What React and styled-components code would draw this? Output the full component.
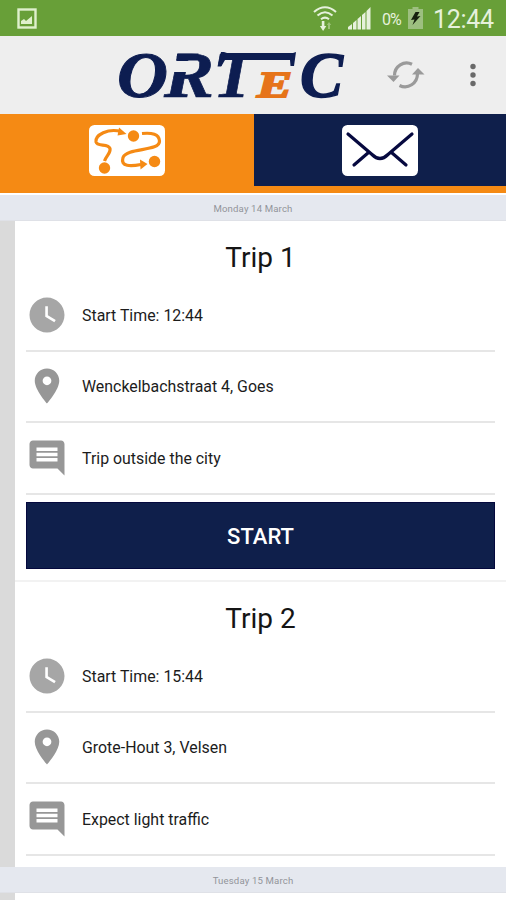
import React from 'react'
import styled, { createGlobalStyle } from 'styled-components'
import { MdWatchLater, MdPlace, MdComment } from 'react-icons/md'

const navy = '#0f1f4b'
const orange = '#f58a14'

const GlobalStyle = createGlobalStyle`
  * {
    box-sizing: border-box;
  }

  body {
    margin: 0;
    background-color: #fff;
    font-family: Roboto, sans-serif;
    overflow: hidden;
  }
`

const Screen = styled.div`
  display: flex;
  flex-direction: column;
  width: 506px;
  height: 900px;
  overflow: hidden;
`

const StatusBar = styled.div`
  display: flex;
  align-items: center;
  flex: 0 0 36px;
  padding: 0 12px 0 17px;
  background-color: #689f38;
  color: #e6f1dc;
`

const StatusIcons = styled.div`
  display: flex;
  align-items: center;
  gap: 11px;
  margin-left: auto;
`

const Percent = styled.span`
  width: 21px;
  margin: 3px 5px 0 11px;
  font-size: 16px;
  letter-spacing: -0.9px;
  white-space: nowrap;
`

const Clock = styled.span`
  width: 61px;
  margin: 2px 0 0 10px;
  font-size: 25px;
  letter-spacing: -0.3px;
  white-space: nowrap;
`

const Header = styled.header`
  display: flex;
  align-items: center;
  flex: 0 0 78px;
  padding: 0 25px 0 110px;
  background-color: #eeeeee;
`

const IconButton = styled.button`
  display: flex;
  padding: 0;
  border: 0;
  margin-left: ${props => props.gap};
  background: none;
`

const Tabs = styled.nav`
  display: grid;
  grid-template-columns: 254px 1fr;
  flex: 0 0 79px;
  padding-bottom: 7px;
  background-color: ${orange};
`

const Tab = styled.button`
  display: flex;
  justify-content: center;
  padding: 11px 0 0;
  border: 0;
  background-color: ${props => (props.selected ? orange : navy)};
`

const DateBar = styled.div`
  display: flex;
  align-items: center;
  justify-content: center;
  flex: 0 0 26px;
  margin-top: ${props => props.gap || 0};
  padding-top: 1px;
  border-bottom: 1px solid #dfe1e7;
  background-color: #e5e8ef;
  color: #92949a;
  font-size: 9.6px;
  letter-spacing: 0.15px;
`

const Day = styled.section`
  flex: 0 0 ${props => props.height};
  overflow: hidden;
  border-left: 15px solid #dadada;
`

const Card = styled.article`
  height: 361px;
  padding: 0 11px;
  border-bottom: 2px solid #f2f2f2;
`

const Title = styled.h2`
  height: 59px;
  margin: 0;
  padding-top: 7px;
  color: #151515;
  font-size: 28px;
  font-weight: 400;
  line-height: 60px;
  text-align: center;
`

const Row = styled.div`
  display: flex;
  align-items: center;
  height: 71.6px;
  border-bottom: 2px solid #e6e6e6;
  color: #1c1c1c;
  font-size: 15.9px;
`

const RowIcon = styled.span`
  display: flex;
  width: 56px;
  color: ${props => props.tint || '#979797'};
`

const RowText = styled.span`
  padding-top: 1px;
`

const StartButton = styled.button`
  display: block;
  width: 100%;
  height: 67px;
  margin-top: 7px;
  padding: 2px 0 0;
  border: 1px solid #04083d;
  background-color: ${navy};
  color: #fff;
  font-family: Roboto, sans-serif;
  font-size: 22px;
  font-weight: 500;
`

const LogoSvg = styled.svg`
  overflow: visible;
`

const LogoText = styled.text`
  font-family: 'Liberation Serif', serif;
  font-size: ${props => props.size || 66}px;
  font-style: italic;
  font-weight: 700;
`

const PictureIcon = () => (
  <svg width="20" height="21" viewBox="0 0 20 21">
    <rect x="1.5" y="1.5" width="17" height="18" fill="none" stroke="#dff0cd" strokeWidth="2.4" />
    <path d="M4 16v-3l3-2 2 2 6-5v8z" fill="#dff0cd" />
  </svg>
)

const WifiIcon = () => (
  <svg width="24" height="26" viewBox="0 0 24 26">
    <g fill="none" stroke="#e6f1dc" strokeWidth="2.1">
      <path d="M1 7Q12-2.500 23 7" />
      <path d="M4.500 10.500Q12 4 19.500 10.500" />
      <path d="M8 14.200Q12 11 16 14.200" />
    </g>
    <path d="M8.800 16h2.600v5h1.900L10.100 26l-3.200-5h1.900z" fill="#e6f1dc" />
    <path d="M15 24v-4h-1.200l2.200-3 2.200 3H17v4z" fill="#9cc179" />
  </svg>
)

const SignalIcon = () => (
  <svg width="23" height="23" viewBox="0 0 23 23">
    <g fill="#e6f1dc">
      <path d="M0 22.500V20l4-3v5.500z" />
      <path d="M5 22.500V16l3.500-3v9.500z" />
      <path d="M9.500 22.500V12l3.500-3v13.500z" />
      <path d="M14 22.500V8l3.500-3v17.500z" />
      <path d="M18.500 22.500V4L22.500 0v22.500z" />
    </g>
  </svg>
)

const BatteryIcon = () => (
  <svg width="15" height="22" viewBox="0 0 15 22">
    <path d="M0 2h4.500V0h6v2H15v20H0z" fill="#9dbf80" />
    <path d="M7.500 5h4L9 9.500l3.500-.5L4.500 18l2-5.500L3 13z" fill="#16210d" />
  </svg>
)

// the T crossbar runs on over the small orange E
const Logo = () => (
  <LogoSvg width="240" height="78" viewBox="0 -9 240 78" fill="#0d1d51">
    <LogoText x="7" y="52" textLength="51" lengthAdjust="spacingAndGlyphs" stroke="#0d1d51" strokeWidth="1">O</LogoText>
    <LogoText x="54" y="52" textLength="50" lengthAdjust="spacingAndGlyphs" stroke="#0d1d51" strokeWidth="0.7">R</LogoText>
    <path d="M60 4h8l-2 12h18l-3 11h-22z" fill="#eeeeee" />
    <path d="M67.500 8.500h21v7H66z" />
    <LogoText x="103" y="52" textLength="42" lengthAdjust="spacingAndGlyphs" stroke="#0d1d51" strokeWidth="0.7">T</LogoText>
    <path d="M134 14h18v14h-20z" fill="#eeeeee" />
    <path d="M111 7h3l3 1h66l3-1-2 14h-3.500l-.5-6H115l-3.500 6H108z" />
    <LogoText x="147" y="51.500" size="36" fill="#e67419" stroke="#e67419" strokeWidth="1.800" textLength="35" lengthAdjust="spacingAndGlyphs">E</LogoText>
    <LogoText x="190" y="52" textLength="43" lengthAdjust="spacingAndGlyphs" stroke="#0d1d51" strokeWidth="1.400">C</LogoText>
  </LogoSvg>
)

const SyncIcon = () => (
  <svg width="38" height="30" viewBox="0 0 38 30">
    <g fill="none" stroke="#9a9a9a" strokeWidth="3.200">
      <path d="M7.500 15.500C7.500 6 17 .2 25 4.200" />
      <path d="M30.500 13.500C30.500 23.500 21 29.500 12.500 25.500" />
    </g>
    <path d="M0 15.500h12.500L6.500 22z" fill="#9a9a9a" />
    <path d="M25 14.500h12.500L31 8z" fill="#9a9a9a" />
  </svg>
)

const MoreIcon = () => (
  <svg width="6" height="24" viewBox="0 0 6 24" fill="#696969">
    <circle cx="3" cy="3.500" r="2.700" />
    <circle cx="3" cy="12" r="2.700" />
    <circle cx="3" cy="20.500" r="2.700" />
  </svg>
)

const RouteIcon = () => (
  <svg width="76" height="51" viewBox="0 0 76 51">
    <rect width="76" height="51" rx="5.500" fill="#fff" />
    <g fill="none" stroke={orange} strokeWidth="3.200">
      <path d="M15.500 36C17 31 22 28 21 23.500C19.500 18 8 22 7 17C6 10 19 3 32 6.500" />
      <path d="M53 8.500C63 7.500 70 9 70.500 16C71 27 38 22 34 32.500C31 42 42 41.500 52 39.500" />
    </g>
    <g fill={orange}>
      <path d="M30 2.500l7.500 6.500-9 1.500z" />
      <path d="M51 34.500l7.500 4.500-7 5.500z" />
      <circle cx="15.500" cy="43" r="5.700" />
      <circle cx="44.500" cy="11" r="5.700" />
      <circle cx="65.500" cy="36.500" r="5.700" />
    </g>
  </svg>
)

const MailIcon = () => (
  <svg width="76" height="51" viewBox="0 0 76 51">
    <rect width="76" height="51" rx="5.500" fill="#fff" />
    <g fill="none" stroke="#06093f" strokeWidth="3.200" strokeLinecap="round">
      <path d="M6 9L30 29.500Q38 37.500 46 29.500L70 9" />
      <path d="M26.500 27.500L12 40" />
      <path d="M49.500 27.500L64 40" />
    </g>
  </svg>
)

const Trip = ({ name, time, address, note, canStart }) => (
  <Card>
    <Title>{name}</Title>
    <Row>
      <RowIcon tint="#a6a6a6"><MdWatchLater size={42} /></RowIcon>
      <RowText>Start Time: {time}</RowText>
    </Row>
    <Row>
      <RowIcon><MdPlace size={42} /></RowIcon>
      <RowText>{address}</RowText>
    </Row>
    <Row>
      <RowIcon><MdComment size={42} /></RowIcon>
      <RowText>{note}</RowText>
    </Row>
    {canStart && <StartButton>START</StartButton>}
  </Card>
)

const App = () => (
  <>
    <GlobalStyle />
    <Screen>
      <StatusBar>
        <PictureIcon />
        <StatusIcons>
          <WifiIcon />
          <SignalIcon />
        </StatusIcons>
        <Percent>0%</Percent>
        <BatteryIcon />
        <Clock>12:44</Clock>
      </StatusBar>
      <Header>
        <Logo />
        <IconButton gap="37px"><SyncIcon /></IconButton>
        <IconButton gap="45px"><MoreIcon /></IconButton>
      </Header>
      <Tabs>
        <Tab selected><RouteIcon /></Tab>
        <Tab><MailIcon /></Tab>
      </Tabs>
      <DateBar gap="2px">Monday 14 March</DateBar>
      <Day height="646px">
        <Trip
          name="Trip 1"
          time="12:44"
          address="Wenckelbachstraat 4, Goes"
          note="Trip outside the city"
          canStart
        />
        <Trip
          name="Trip 2"
          time="15:44"
          address="Grote-Hout 3, Velsen"
          note="Expect light traffic"
        />
      </Day>
      <DateBar>Tuesday 15 March</DateBar>
      <Day height="7px" />
    </Screen>
  </>
)

export default App
